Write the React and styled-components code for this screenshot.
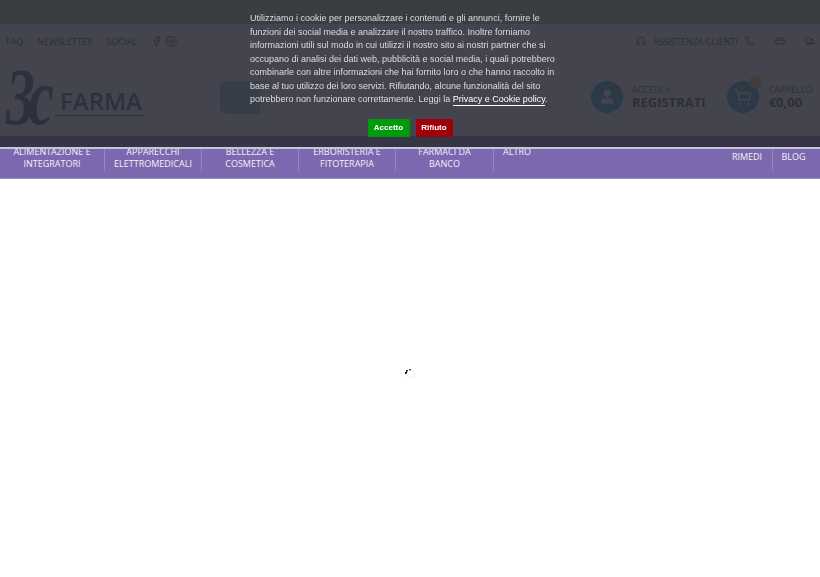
import React from "react";
import styled, { createGlobalStyle } from "styled-components";
import { Facebook, Instagram, Phone, Headphones, CreditCard, Truck, User, ShoppingCart } from "lucide-react";

const Global = createGlobalStyle`
  html, body { margin: 0; padding: 0; background: #fff; }
  body { font-family: "Open Sans", sans-serif; }
  * { box-sizing: border-box; }
`;

const Page = styled.div`
  position: relative;
  width: 820px;
  height: 577px;
  overflow: hidden;
  background: #fff;
`;

const PromoStrip = styled.div`
  height: 24px;
  background: #a6be76;
`;

const TopBar = styled.div`
  height: 34px;
  display: flex;
  align-items: center;
  justify-content: space-between;
  padding: 0 5px 0 6px;
  font-size: 9px;
  color: #111;
`;

const TopGroup = styled.div`
  display: flex;
  align-items: center;
  gap: ${(p) => p.$gap}px;
`;

const Masthead = styled.div`
  height: 78px;
  display: flex;
  align-items: center;
  padding: 0 5px 0 6px;
`;

const Logo = styled.div`
  width: 214px;
  height: 62px;
  flex: none;
  display: flex;
  align-items: flex-end;
  color: #20405e;
`;

const LogoMark = styled.span`
  font: italic 700 80px/62px "Liberation Serif", serif;
  letter-spacing: -9px;
  width: 49px;
  transform: scaleX(0.72);
  transform-origin: left center;
`;

const LogoWord = styled.span`
  font: 600 24px/28px "Open Sans", sans-serif;
  padding-left: 5px;
  border-bottom: 1px solid #20405e;
  width: 88px;
  margin-bottom: 12px;
`;

const Search = styled.div`
  flex: none;
  width: 350px;
  height: 33px;
  border-radius: 5px;
  overflow: hidden;
  background: #f0f3f6;
`;

const SearchButton = styled.div`
  width: 40px;
  height: 100%;
  background: #8fb8d8;
`;

const Account = styled.div`
  flex: none;
  display: flex;
  align-items: center;
  gap: ${(p) => p.$gap}px;
  margin-left: ${(p) => p.$left}px;
`;

const RoundIcon = styled.div`
  position: relative;
  width: 32px;
  height: 32px;
  border-radius: 50%;
  background: #1a8cb0;
  display: flex;
  align-items: center;
  justify-content: center;
  color: #fff;
`;

const Badge = styled.span`
  position: absolute;
  top: -5px;
  right: -3px;
  width: 13px;
  height: 13px;
  border-radius: 50%;
  background: #c8c020;
`;

const AccountText = styled.div`
  display: flex;
  flex-direction: column;
`;

const SmallLabel = styled.span`
  font-size: 9px;
  line-height: 11px;
  color: #333;
`;

const BigLabel = styled.span`
  font-size: 13px;
  line-height: 15px;
  font-weight: 700;
  color: #222;
`;

const Nav = styled.nav`
  height: 43px;
  background: #7b68ae;
  border-bottom: 1px solid #9b8fc0;
  display: flex;
  justify-content: space-between;
  padding: 10px 6px 0 0;
`;

const NavGroup = styled.div`
  display: flex;
  height: 25px;
`;

const NavItem = styled.a`
  width: ${(p) => p.$w}px;
  padding-top: ${(p) => p.$pad || 0}px;
  font: 400 9px/12px "Open Sans", sans-serif;
  color: #f3f1f8;
  text-align: center;
  display: block;
  border-left: ${(p) => (p.$first ? "none" : "1px solid #9587c0")};
  height: 25px;
`;

const Overlay = styled.div`
  position: absolute;
  top: 0;
  left: 0;
  width: 100%;
  height: 149px;
  background: rgba(47, 48, 59, 0.9);
  backdrop-filter: blur(0.7px);
  border-bottom: 2px solid #c9c3de;
  display: flex;
  flex-direction: column;
  align-items: center;
  padding-top: 12px;
`;

const Message = styled.p`
  margin: 0;
  width: 320px;
  font: 400 9px/13.5px "Liberation Sans", Arial, sans-serif;
  color: #dcdde0;
  white-space: nowrap;
`;

const PolicyLink = styled.a`
  color: #fff;
  border-bottom: 1px solid #fff;
  padding-bottom: 1px;
`;

const Actions = styled.div`
  display: flex;
  gap: 6px;
  margin-top: 12px;
`;

const Btn = styled.button`
  height: 18px;
  width: ${(p) => p.$w}px;
  padding: 0;
  border: none;
  border-radius: 1px;
  font: 700 8px/18px "Liberation Sans", Arial, sans-serif;
  color: #fff;
  background: ${(p) => p.$bg};
`;

const Loader = styled.svg`
  position: absolute;
  left: 403px;
  top: 367px;
`;

const navLeft = [
  ["ALIMENTAZIONE E", "INTEGRATORI", 104],
  ["APPARECCHI", "ELETTROMEDICALI", 97],
  ["BELLEZZA E", "COSMETICA", 97],
  ["ERBORISTERIA E", "FITOTERAPIA", 97],
  ["FARMACI DA", "BANCO", 98],
  ["ALTRO", "", 47],
];

const lines = [
  "Utilizziamo i cookie per personalizzare i contenuti e gli annunci, fornire le",
  "funzioni dei social media e analizzare il nostro traffico. Inoltre forniamo",
  "informazioni utili sul modo in cui utilizzi il nostro sito ai nostri partner che si",
  "occupano di analisi dei dati web, pubblicità e social media, i quali potrebbero",
  "combinarle con altre informazioni che hai fornito loro o che hanno raccolto in",
  "base al tuo utilizzo dei loro servizi. Rifiutando, alcune funzionalità del sito",
];

export default function App() {
  return (
    <Page>
      <Global />
      <PromoStrip />
      <TopBar>
        <TopGroup $gap={14}>
          <span>FAQ</span>
          <span>NEWSLETTER</span>
          <span>SOCIAL</span>
          <TopGroup $gap={4}>
            <Facebook size={11} />
            <Instagram size={11} />
          </TopGroup>
        </TopGroup>
        <TopGroup $gap={20}>
          <TopGroup $gap={7}>
            <Headphones size={10} />
            <span>ASSISTENZA CLIENTI</span>
            <Phone size={10} />
          </TopGroup>
          <CreditCard size={10} />
          <Truck size={10} />
        </TopGroup>
      </TopBar>
      <Masthead>
        <Logo>
          <LogoMark>3c</LogoMark>
          <LogoWord>FARMA</LogoWord>
        </Logo>
        <Search>
          <SearchButton />
        </Search>
        <Account $left={21} $gap={9}>
          <RoundIcon>
            <User size={18} fill="#fff" />
          </RoundIcon>
          <AccountText>
            <SmallLabel>ACCEDI o</SmallLabel>
            <BigLabel>REGISTRATI</BigLabel>
          </AccountText>
        </Account>
        <Account $left={21} $gap={10}>
          <RoundIcon>
            <Badge />
            <ShoppingCart size={18} />
          </RoundIcon>
          <AccountText>
            <SmallLabel>CARRELLO</SmallLabel>
            <BigLabel>€0,00</BigLabel>
          </AccountText>
        </Account>
      </Masthead>
      <Nav>
        <NavGroup>
          {navLeft.map(([a, b, w], i) => (
            <NavItem key={a} $w={w} $first={i === 0}>
              {a}
              <br />
              {b}
            </NavItem>
          ))}
        </NavGroup>
        <NavGroup>
          <NavItem $w={50} $first $pad={5}>RIMEDI</NavItem>
          <NavItem $w={42} $pad={5}>BLOG</NavItem>
        </NavGroup>
      </Nav>
      <Overlay>
        <Message>
          {lines.map((l) => (
            <React.Fragment key={l}>
              {l}
              <br />
            </React.Fragment>
          ))}
          potrebbero non funzionare correttamente. Leggi la{" "}
          <PolicyLink>Privacy e Cookie policy</PolicyLink>.
        </Message>
        <Actions>
          <Btn $w={42} $bg="#009a0d">Accetto</Btn>
          <Btn $w={37} $bg="#a00008">Rifiuto</Btn>
        </Actions>
      </Overlay>
      <Loader width="14" height="12" viewBox="0 0 14 12">
        <rect x="3" y="3" width="2" height="2" fill="#333" />
        <rect x="6" y="2" width="2" height="2" fill="#222" />
        <rect x="2" y="5" width="2" height="2" fill="#111" />
        <circle cx="8" cy="7" r="4" fill="none" stroke="#eee" strokeWidth="1" />
      </Loader>
    </Page>
  );
}
